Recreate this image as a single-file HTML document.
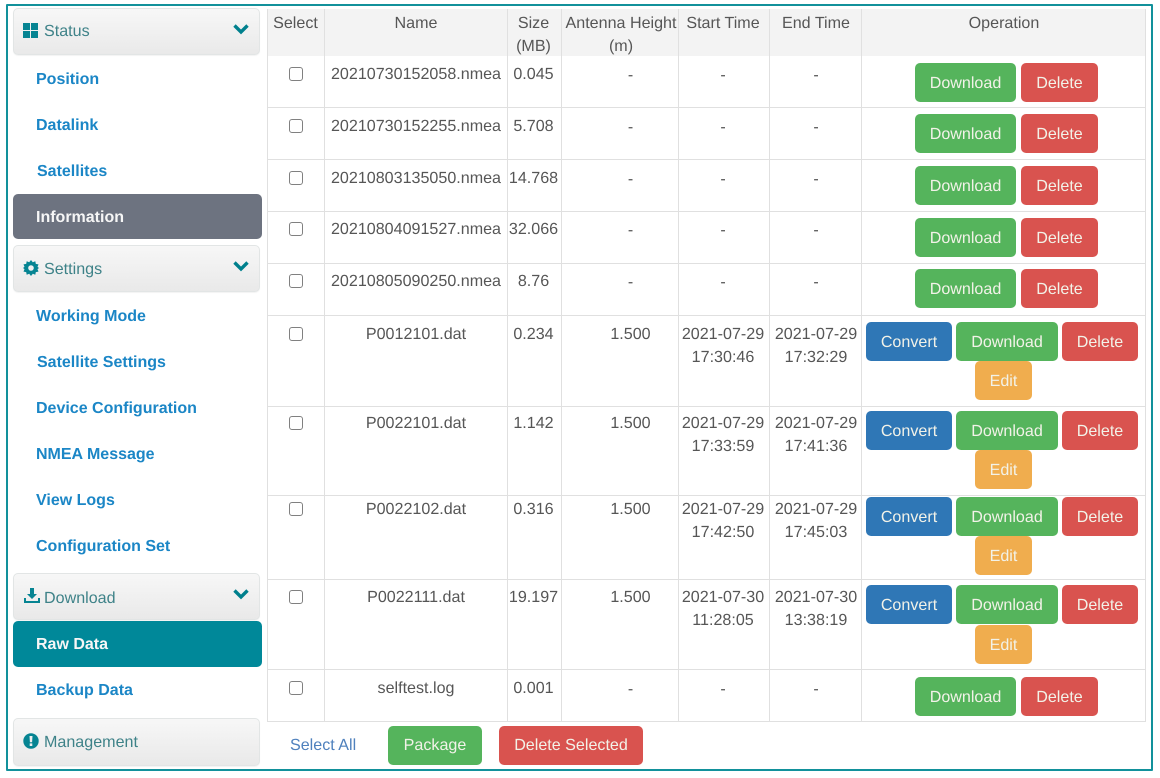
<!DOCTYPE html>
<html><head><meta charset="utf-8"><style>
html,body{margin:0;padding:0;background:#fff}
#p{position:relative;width:1160px;height:778px;overflow:hidden;background:#fff;font-family:"Liberation Sans",sans-serif;font-size:16.1px;color:#555;text-rendering:geometricPrecision;filter:blur(.35px)}
#p div,#p svg{position:absolute}
.f{left:6px;top:4px;width:1147px;height:767px;box-sizing:border-box;border:2px solid #12919b;border-radius:1px}
.h{left:13px;width:247px;height:47px;box-sizing:border-box;border:1px solid #e2e5e5;border-radius:5px;background:linear-gradient(#f7f7f7,#e9e9e9);box-shadow:0 1px 1px rgba(0,0,0,.05)}
.ht{left:44px;color:#3e8288;line-height:24px;white-space:nowrap;margin-top:1px}
.l{color:#1b86c6;font-weight:bold;font-size:16px;line-height:24px;white-space:nowrap;left:36px;margin-top:1px}
.a{left:13px;width:249px;border-radius:5px}
.hl{background:#e0e0e0}
.hh{left:267px;top:9px;width:879px;height:47px;background:#f3f3f3}
.c{text-align:center;line-height:23px;white-space:nowrap;color:#565656;margin-top:1px}
.n{left:325px;width:182px}.s{left:507px;width:53px}.d{left:562px;width:137px}.t1{left:678px;width:90px}.t2{left:770px;width:92px}
.b{color:#f2f2e8;text-align:center;line-height:40px;height:39px;border-radius:5px;white-space:nowrap}
.g{background:#55b45c}.r{background:#d9534f}.u{background:#2f77b6}.o{background:#f0ad4e}
.k{left:288.5px;width:12px;height:12px;border:1.5px solid #808080;border-radius:3px;background:#fff}
</style></head><body><div id="p">
<div class="f"></div>

<div class="h" style="top:8px"></div>
<svg style="left:23px;top:23px" width="15" height="16" viewBox="0 0 15 16"><path fill="#068492" d="M0 0h7v7H0zM8 0h7v7H8zM0 8h7v7H0zM8 8h7v7H8z"/></svg>
<div class="ht" style="top:18px">Status</div>
<svg style="left:233px;top:24px" width="16" height="11" viewBox="0 0 16 11"><path fill="none" stroke="#00808d" stroke-width="3.4" d="M1.5 1.5L8 8l6.500-6.500"/></svg>
<div class="l" style="top:67px">Position</div>
<div class="l" style="top:113px">Datalink</div>
<div class="l" style="top:159px;left:37px">Satellites</div>
<div class="a" style="top:194px;height:45px;background:#6d7380"></div>
<div class="l" style="top:205px;color:#f6f6f6">Information</div>

<div class="h" style="top:245px"></div>
<svg style="left:23px;top:260px" width="16" height="16" viewBox="0 0 16 16"><path fill="#068492" fill-rule="evenodd" d="M8 0l1.800 2.200 2.500-1 .5 2.700 2.700.5-1 2.500L16 8l-1.500 1.100 1 2.500-2.700.5-.5 2.700-2.500-1L8 16l-1.800-2.200-2.500 1-.5-2.700-2.700-.5 1-2.500L0 8l1.500-1.100-1-2.500 2.700-.5.500-2.700 2.500 1zM8 5.200a2.800 2.800 0 1 0 0 5.600 2.800 2.800 0 0 0 0-5.600z"/></svg>
<div class="ht" style="top:256px">Settings</div>
<svg style="left:233px;top:261px" width="16" height="11" viewBox="0 0 16 11"><path fill="none" stroke="#00808d" stroke-width="3.4" d="M1.500 1.500L8 8l6.500-6.500"/></svg>
<div class="l" style="top:304px">Working Mode</div>
<div class="l" style="top:350px;left:37px">Satellite Settings</div>
<div class="l" style="top:396px">Device Configuration</div>
<div class="l" style="top:442px">NMEA Message</div>
<div class="l" style="top:488px">View Logs</div>
<div class="l" style="top:534px">Configuration Set</div>

<div class="h" style="top:573px"></div>
<svg style="left:24px;top:588px" width="16" height="16" viewBox="0 0 16 16"><path fill="#068492" d="M6 0h4v6h3l-5 5-5-5h3zM0 10h2v3h12v-3h2v5H0z"/></svg>
<div class="ht" style="top:585px">Download</div>
<svg style="left:233px;top:589px" width="16" height="11" viewBox="0 0 16 11"><path fill="none" stroke="#00808d" stroke-width="3.4" d="M1.500 1.500L8 8l6.500-6.500"/></svg>
<div class="a" style="top:621px;height:46px;background:#008899"></div>
<div class="l" style="top:632px;color:#f6f6f6">Raw Data</div>
<div class="l" style="top:678px">Backup Data</div>

<div class="h" style="top:718px;height:48px"></div>
<svg style="left:23px;top:733px" width="16" height="16" viewBox="0 0 16 16"><circle cx="8" cy="8" r="7.700" fill="#068492"/><path fill="#eee" d="M6.500 3h3l-.4 6.200H6.900zM6.700 10.400h2.600V13H6.700z"/></svg>
<div class="ht" style="top:729px">Management</div>

<div class="hh"></div>
<div class="hl" style="left:267px;top:9px;width:1px;height:713px"></div>
<div class="hl" style="left:324px;top:9px;width:1px;height:713px"></div>
<div class="hl" style="left:507px;top:9px;width:1px;height:713px"></div>
<div class="hl" style="left:561px;top:9px;width:1px;height:713px"></div>
<div class="hl" style="left:678px;top:9px;width:1px;height:713px"></div>
<div class="hl" style="left:769px;top:9px;width:1px;height:713px"></div>
<div class="hl" style="left:861px;top:9px;width:1px;height:713px"></div>
<div class="hl" style="left:1145px;top:9px;width:1px;height:713px"></div>
<div class="hl" style="left:267px;top:107px;width:879px;height:1px"></div>
<div class="hl" style="left:267px;top:159px;width:879px;height:1px"></div>
<div class="hl" style="left:267px;top:211px;width:879px;height:1px"></div>
<div class="hl" style="left:267px;top:263px;width:879px;height:1px"></div>
<div class="hl" style="left:267px;top:315px;width:879px;height:1px"></div>
<div class="hl" style="left:267px;top:406px;width:879px;height:1px"></div>
<div class="hl" style="left:267px;top:495px;width:879px;height:1px"></div>
<div class="hl" style="left:267px;top:579px;width:879px;height:1px"></div>
<div class="hl" style="left:267px;top:669px;width:879px;height:1px"></div>
<div class="hl" style="left:267px;top:721px;width:879px;height:1px"></div>

<div class="c" style="left:267px;width:57px;top:11px">Select</div>
<div class="c n" style="top:11px">Name</div>
<div class="c s" style="top:11px">Size<br>(MB)</div>
<div class="c" style="left:560px;width:122px;top:11px">Antenna Height<br>(m)</div>
<div class="c t1" style="top:11px">Start Time</div>
<div class="c t2" style="top:11px">End Time</div>
<div class="c" style="left:862px;width:284px;top:11px">Operation</div>

<div class="k" style="top:67px"></div><div class="c n" style="top:62px">20210730152058.nmea</div><div class="c s" style="top:62px">0.045</div><div class="c d" style="top:63px">-</div><div class="c t1" style="top:63px">-</div><div class="c t2" style="top:63px">-</div>
<div class="b g" style="left:915px;top:63px;width:101px">Download</div><div class="b r" style="left:1021px;top:63px;width:77px">Delete</div>

<div class="k" style="top:119px"></div><div class="c n" style="top:114px">20210730152255.nmea</div><div class="c s" style="top:114px">5.708</div><div class="c d" style="top:115px">-</div><div class="c t1" style="top:115px">-</div><div class="c t2" style="top:115px">-</div>
<div class="b g" style="left:915px;top:114px;width:101px">Download</div><div class="b r" style="left:1021px;top:114px;width:77px">Delete</div>

<div class="k" style="top:171px"></div><div class="c n" style="top:166px">20210803135050.nmea</div><div class="c s" style="top:166px">14.768</div><div class="c d" style="top:167px">-</div><div class="c t1" style="top:167px">-</div><div class="c t2" style="top:167px">-</div>
<div class="b g" style="left:915px;top:166px;width:101px">Download</div><div class="b r" style="left:1021px;top:166px;width:77px">Delete</div>

<div class="k" style="top:222px"></div><div class="c n" style="top:217px">20210804091527.nmea</div><div class="c s" style="top:217px">32.066</div><div class="c d" style="top:218px">-</div><div class="c t1" style="top:218px">-</div><div class="c t2" style="top:218px">-</div>
<div class="b g" style="left:915px;top:218px;width:101px">Download</div><div class="b r" style="left:1021px;top:218px;width:77px">Delete</div>

<div class="k" style="top:274px"></div><div class="c n" style="top:269px">20210805090250.nmea</div><div class="c s" style="top:269px">8.76</div><div class="c d" style="top:270px">-</div><div class="c t1" style="top:270px">-</div><div class="c t2" style="top:270px">-</div>
<div class="b g" style="left:915px;top:269px;width:101px">Download</div><div class="b r" style="left:1021px;top:269px;width:77px">Delete</div>

<div class="k" style="top:327px"></div><div class="c n" style="top:322px">P0012101.dat</div><div class="c s" style="top:322px">0.234</div><div class="c d" style="top:322px">1.500</div><div class="c t1" style="top:322px">2021-07-29<br>17:30:46</div><div class="c t2" style="top:322px">2021-07-29<br>17:32:29</div>
<div class="b u" style="left:866px;top:322px;width:86px">Convert</div><div class="b g" style="left:956px;top:322px;width:102px">Download</div><div class="b r" style="left:1062px;top:322px;width:76px">Delete</div><div class="b o" style="left:975px;top:361px;width:57px">Edit</div>

<div class="k" style="top:416px"></div><div class="c n" style="top:411px">P0022101.dat</div><div class="c s" style="top:411px">1.142</div><div class="c d" style="top:411px">1.500</div><div class="c t1" style="top:411px">2021-07-29<br>17:33:59</div><div class="c t2" style="top:411px">2021-07-29<br>17:41:36</div>
<div class="b u" style="left:866px;top:411px;width:86px">Convert</div><div class="b g" style="left:956px;top:411px;width:102px">Download</div><div class="b r" style="left:1062px;top:411px;width:76px">Delete</div><div class="b o" style="left:975px;top:450px;width:57px">Edit</div>

<div class="k" style="top:502px"></div><div class="c n" style="top:497px">P0022102.dat</div><div class="c s" style="top:497px">0.316</div><div class="c d" style="top:497px">1.500</div><div class="c t1" style="top:497px">2021-07-29<br>17:42:50</div><div class="c t2" style="top:497px">2021-07-29<br>17:45:03</div>
<div class="b u" style="left:866px;top:497px;width:86px">Convert</div><div class="b g" style="left:956px;top:497px;width:102px">Download</div><div class="b r" style="left:1062px;top:497px;width:76px">Delete</div><div class="b o" style="left:975px;top:536px;width:57px">Edit</div>

<div class="k" style="top:590px"></div><div class="c n" style="top:585px">P0022111.dat</div><div class="c s" style="top:585px">19.197</div><div class="c d" style="top:585px">1.500</div><div class="c t1" style="top:585px">2021-07-30<br>11:28:05</div><div class="c t2" style="top:585px">2021-07-30<br>13:38:19</div>
<div class="b u" style="left:866px;top:585px;width:86px">Convert</div><div class="b g" style="left:956px;top:585px;width:102px">Download</div><div class="b r" style="left:1062px;top:585px;width:76px">Delete</div><div class="b o" style="left:975px;top:625px;width:57px">Edit</div>

<div class="k" style="top:681px"></div><div class="c n" style="top:676px">selftest.log</div><div class="c s" style="top:676px">0.001</div><div class="c d" style="top:677px">-</div><div class="c t1" style="top:677px">-</div><div class="c t2" style="top:677px">-</div>
<div class="b g" style="left:915px;top:677px;width:101px">Download</div><div class="b r" style="left:1021px;top:677px;width:77px">Delete</div>

<div class="c" style="left:290px;top:734px;color:#4f81bd;margin-top:0">Select All</div>
<div class="b g" style="left:388px;top:726px;width:94px;line-height:39px">Package</div>
<div class="b r" style="left:499px;top:726px;width:144px;line-height:39px">Delete Selected</div>
</div></body></html>
